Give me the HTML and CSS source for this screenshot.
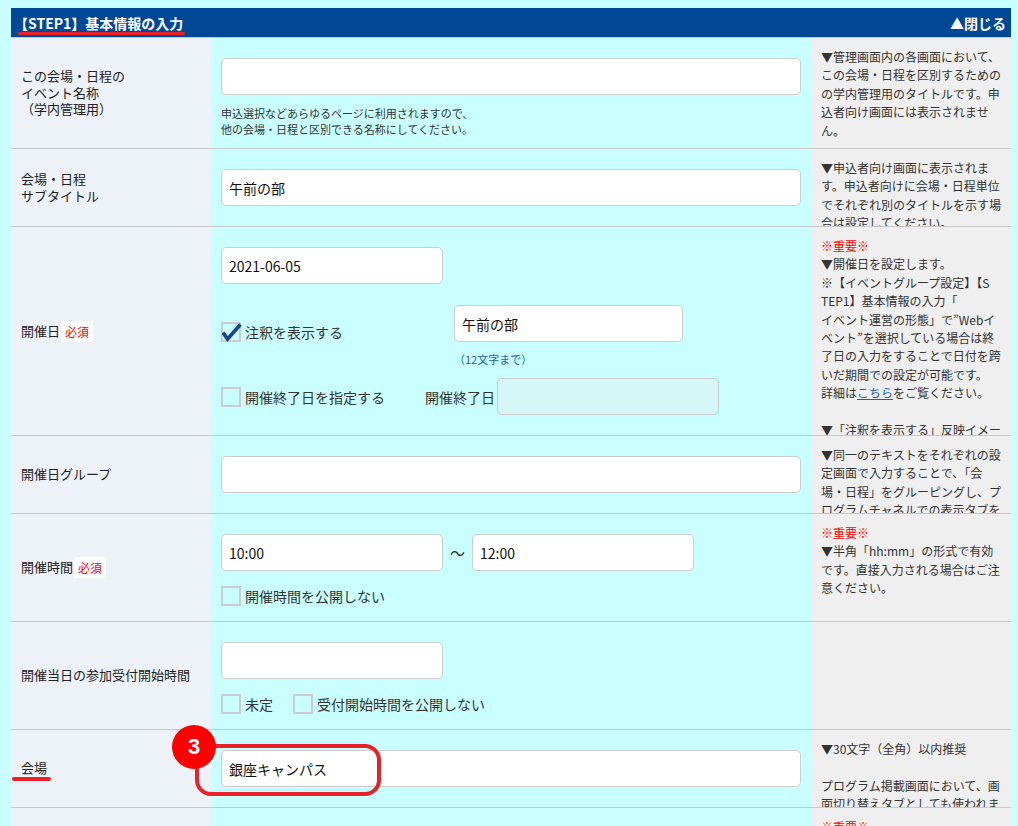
FILE: index.html
```html
<!DOCTYPE html>
<html lang="ja">
<head>
    <meta charset="UTF-8">
    <title>会場・日程の設定</title>
    <link rel="stylesheet" href="styles.css">
</head>
<body>
<div class="page">
    <div class="panel">
        <div class="panel-head">
            <span>【STEP1】基本情報の入力</span>
            <span>▲閉じる</span>
        </div>

        <div class="row">
            <div class="label">この会場・日程の<br>イベント名称<br>（学内管理用）</div>
            <div class="field field-note">
                <input type="text" class="text-input" value="">
                <p class="note">申込選択などあらゆるページに利用されますので、<br>他の会場・日程と区別できる名称にしてください。</p>
            </div>
            <div class="help">▼管理画面内の各画面において、<br>この会場・日程を区別するための<br>の学内管理用のタイトルです。申<br>込者向け画面には表示されませ<br>ん。</div>
        </div>

        <div class="row">
            <div class="label">会場・日程<br>サブタイトル</div>
            <div class="field">
                <input type="text" class="text-input" value="午前の部">
            </div>
            <div class="help">▼申込者向け画面に表示されま<br>す。申込者向けに会場・日程単位<br>でそれぞれ別のタイトルを示す場<br>合は設定してください。</div>
        </div>

        <div class="row">
            <div class="label">開催日<span class="required">必須</span></div>
            <div class="field">
                <input type="text" class="text-input short" value="2021-06-05">
                <div class="inline-set">
                    <label class="check check-note">
                        <span class="box">
                            <svg class="tick" viewBox="0 0 20 20"><polyline points="1,9.5 5.5,16 18.5,1.5" fill="none" stroke="#16468a" stroke-width="3.6"/></svg>
                        </span>
                        注釈を表示する
                    </label>
                    <div class="caption-box">
                        <input type="text" class="text-input mid" value="午前の部">
                        <p class="note note-blue">（12文字まで）</p>
                    </div>
                </div>
                <div class="inline-set end-date">
                    <label class="check"><span class="box"></span>開催終了日を指定する</label>
                    <span class="end-label">開催終了日</span>
                    <input type="text" class="text-input short" disabled>
                </div>
            </div>
            <div class="help"><span class="important">※重要※</span><br>▼開催日を設定します。<br>※【イベントグループ設定】【S<br>TEP1】基本情報の入力「<br>イベント運営の形態」で”Webイ<br>ベント”を選択している場合は終<br>了日の入力をすることで日付を跨<br>いだ期間での設定が可能です。<br>詳細は<a href="#">こちら</a>をご覧ください。<br><br>▼「注釈を表示する」反映イメー<br>ジ</div>
        </div>

        <div class="row">
            <div class="label">開催日グループ</div>
            <div class="field">
                <input type="text" class="text-input" value="">
            </div>
            <div class="help">▼同一のテキストをそれぞれの設<br>定画面で入力することで、「会<br>場・日程」をグルーピングし、プ<br>ログラムチャネルでの表示タブを<br>切り替えることができます。</div>
        </div>

        <div class="row">
            <div class="label">開催時間<span class="required">必須</span></div>
            <div class="field field-check">
                <div class="time-range">
                    <input type="text" class="text-input short" value="10:00">
                    <span class="tilde">～</span>
                    <input type="text" class="text-input short" value="12:00">
                </div>
                <div class="check-line">
                    <label class="check"><span class="box"></span>開催時間を公開しない</label>
                </div>
            </div>
            <div class="help"><span class="important">※重要※</span><br>▼半角「hh:mm」の形式で有効<br>です。直接入力される場合はご注<br>意ください。</div>
        </div>

        <div class="row">
            <div class="label">開催当日の参加受付開始時間</div>
            <div class="field field-check">
                <input type="text" class="text-input short" value="">
                <div class="check-line">
                    <label class="check"><span class="box"></span>未定</label>
                    <label class="check"><span class="box"></span>受付開始時間を公開しない</label>
                </div>
            </div>
            <div class="help"></div>
        </div>

        <div class="row">
            <div class="label">会場</div>
            <div class="field">
                <input type="text" class="text-input" value="銀座キャンパス">
            </div>
            <div class="help">▼30文字（全角）以内推奨<br><br>プログラム掲載画面において、画<br>面切り替えタブとしても使われま<br>す。</div>
        </div>

        <div class="row">
            <div class="label">会場所在地</div>
            <div class="field">
                <input type="text" class="text-input" value="">
            </div>
            <div class="help"><span class="important">※重要※</span><br>▼地図の表示に利用されます。</div>
        </div>
    </div>

    <!-- annotations drawn over the screen -->
    <span class="mark-line mark-head"></span>
    <span class="mark-line mark-venue"></span>
    <span class="mark-ring"></span>
    <span class="mark-num">3</span>
</div>
</body>
</html>
```

FILE: styles.css
```css
* {
    box-sizing: border-box;
    margin: 0;
    padding: 0;
}
body {
    font-family: "Noto Sans CJK JP", "Noto Sans", sans-serif;
    background: #c9ffff;
    color: #222;
}
.page {
    position: relative;
    padding: 8px 0 0 11px;
}
.panel {
    width: 1000px;
}
.panel-head {
    display: flex;
    justify-content: space-between;
    align-items: center;
    height: 29px;
    padding: 0 5px 0 3px;
    background: #004896;
    color: #fff;
    font-size: 14px;
    font-weight: bold;
}
.row {
    display: grid;
    grid-template-columns: 200px 600px 200px;
    border-top: 1px solid #c8c8c8;
}
.label {
    display: flex;
    align-items: center;
    padding: 0 10px;
    background: #edf1f8;
    font-size: 13px;
    line-height: 16.7px;
    color: #222;
}
.required {
    display: inline-block;
    margin-left: 1px;
    padding: 2px 4px;
    background: #fff;
    color: #f00;
    font-size: 12px;
    line-height: 17px;
}
.field {
    padding: 20px 10px;
    background: #c9ffff;
}
.field-note {
    padding-bottom: 11px;
}
.field-check {
    padding-bottom: 15px;
}
.help {
    contain: size;
    overflow: hidden;
    padding: 10px 10px 0;
    background: #efefef;
    font-size: 12px;
    line-height: 18.4px;
    color: #333;
    white-space: nowrap;
}
.help a {
    color: #1a5fc0;
}
.important {
    color: #f00;
}
.text-input {
    display: block;
    width: 100%;
    height: 37px;
    padding: 0 7px;
    border: 1px solid #ccc;
    border-radius: 5px;
    background: #fff;
    font-family: "Noto Sans CJK JP", "Noto Sans", sans-serif;
    font-size: 14px;
    color: #111;
    outline: none;
}
.text-input.short {
    width: 222px;
}
.text-input.mid {
    width: 229px;
}
.text-input:disabled {
    background: #d5f7f7;
}
.note {
    margin-top: 10px;
    font-size: 11px;
    line-height: 16px;
    color: #333;
}
.note-blue {
    margin-top: 9px;
    color: #1f5db0;
}
.inline-set {
    display: flex;
    align-items: flex-start;
    margin-top: 21px;
}
.inline-set.end-date {
    align-items: center;
    margin-top: 11px;
}
.check {
    display: flex;
    align-items: center;
    gap: 4px;
    height: 20px;
    font-size: 14px;
    color: #333;
}
.check-note {
    flex: 0 0 233px;
    margin-top: 17px;
}
.box {
    position: relative;
    flex: none;
    width: 20px;
    height: 20px;
    border: 2px solid #ccc;
}
.tick {
    position: absolute;
    left: -1px;
    top: -1px;
    width: 20px;
    height: 20px;
}
.end-label {
    margin: 0 2px 0 40px;
    font-size: 14px;
    color: #333;
}
.time-range {
    display: flex;
    align-items: center;
}
.tilde {
    width: 29px;
    text-align: center;
    font-size: 15px;
    color: #333;
}
.check-line {
    display: flex;
    gap: 20px;
    margin-top: 15px;
}
.mark-line {
    position: absolute;
    height: 3px;
    border-radius: 2px;
    background: #e8212a;
}
.mark-head {
    left: 18px;
    top: 32px;
    width: 167px;
}
.mark-venue {
    left: 12px;
    top: 777px;
    width: 39px;
    height: 4px;
}
.mark-ring {
    position: absolute;
    left: 195px;
    top: 744px;
    width: 186px;
    height: 52px;
    border: 4px solid #e8212a;
    border-radius: 16px;
}
.mark-num {
    position: absolute;
    left: 172px;
    top: 725px;
    width: 44px;
    height: 44px;
    display: flex;
    align-items: center;
    justify-content: center;
    border-radius: 50%;
    background: #f00;
    color: #fff;
    font-family: "Liberation Sans", Arial, sans-serif;
    font-size: 22px;
    font-weight: bold;
}
```
